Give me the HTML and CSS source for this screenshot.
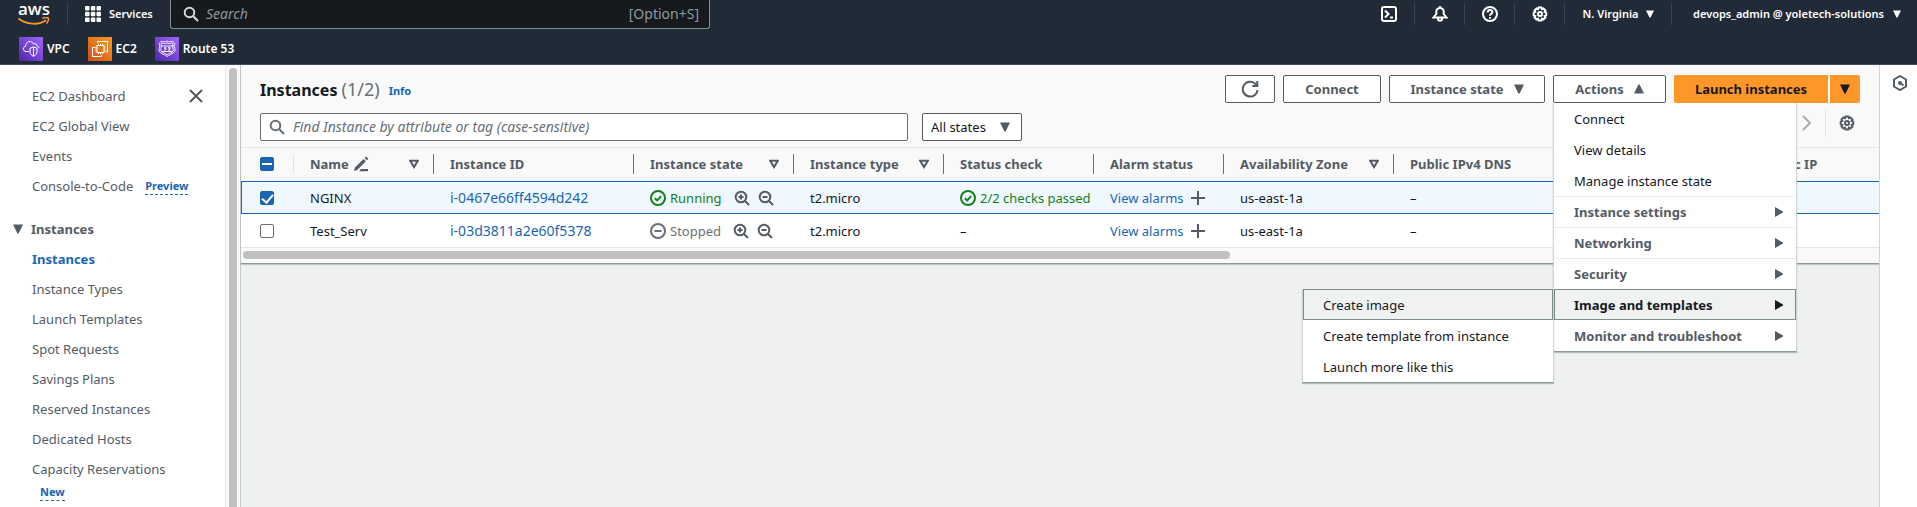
FILE: index.html
```html
<!DOCTYPE html>
<html lang="en">
<head>
<meta charset="utf-8">
<title>Instances | EC2</title>
<link rel="stylesheet" href="styles.css">
</head>
<body>
<svg class="defs" aria-hidden="true">
  <symbol id="search" viewBox="0 0 16 16"><circle cx="6.500" cy="6.500" r="4.800"/><path d="M10.200 10.200 15 15"/></symbol>
  <symbol id="down" viewBox="0 0 10 10"><path d="M0 .5h10L5.600 9.500H4.400z"/></symbol>
  <symbol id="up" viewBox="0 0 10 10"><path d="M0 9.500h10L5.600 .5H4.400z"/></symbol>
  <symbol id="right" viewBox="0 0 10 10"><path d="M1 0v10l8-4.500v-1z"/></symbol>
  <symbol id="sort" viewBox="0 0 10 10"><path d="M1.200 1.800h7.600L5 8z"/></symbol>
  <symbol id="gear" viewBox="0 0 16 16"><path d="M6.600 1h2.800l.5 1.600 1.500-.7 2 2-.8 1.500 1.600.6v2.800l-1.600.6.8 1.500-2 2-1.500-.8-.5 1.700H6.600L6 12.100l-1.500.8-2-2 .8-1.500L1.700 8.800V6l1.600-.6-.8-1.500 2-2 1.500.7z" transform="translate(0 .6)"/><circle cx="8" cy="8" r="2"/></symbol>
  <symbol id="zoomin" viewBox="0 0 16 16"><circle cx="7" cy="7" r="5.300"/><path d="m11 11 4 4M7 4.500v5M4.500 7h5"/></symbol>
  <symbol id="zoomout" viewBox="0 0 16 16"><circle cx="7" cy="7" r="5.300"/><path d="m11 11 4 4M4.500 7h5"/></symbol>
  <symbol id="ok" viewBox="0 0 16 16"><circle cx="8" cy="8" r="7"/><path d="m4.800 8.200 2.300 2.200 4.100-4.300"/></symbol>
  <symbol id="stopped" viewBox="0 0 16 16"><circle cx="8" cy="8" r="7"/><path d="M4.500 8h7"/></symbol>
  <symbol id="plus" viewBox="0 0 16 16"><path d="M8 1v14M1 8h14"/></symbol>
</svg>

<header class="topbar">
  <div class="topbar-main">
    <a class="logo" href="#" aria-label="AWS home">
      <span class="logo-text">aws</span>
      <svg class="logo-smile" viewBox="0 0 32 8"><path d="M.5 1.500C8 8 21 8.300 28 3.200" fill="none" stroke="#ff9926" stroke-width="1.800"/><path d="M24.500 1.300c2-1 5-1.100 5.700-.3s0 3.700-1.600 5.400" fill="none" stroke="#ff9926" stroke-width="1.500"/></svg>
    </a>
    <button class="services" type="button">
      <svg class="i16" viewBox="0 0 16 16" fill="#fff"><path d="M1 0h2.500a1 1 0 0 1 1 1v2.500a1 1 0 0 1-1 1H1a1 1 0 0 1-1-1V1a1 1 0 0 1 1-1z" id="g"/><use href="#g" x="5.800"/><use href="#g" x="11.500"/><use href="#g" y="5.800"/><use href="#g" x="5.800" y="5.800"/><use href="#g" x="11.500" y="5.800"/><use href="#g" y="11.500"/><use href="#g" x="5.800" y="11.500"/><use href="#g" x="11.500" y="11.500"/></svg>
      Services
    </button>
    <label class="global-search">
      <svg class="i16 line"><use href="#search"/></svg>
      <input type="search" placeholder="Search" aria-label="Search">
      <span>[Option+S]</span>
    </label>
    <div class="tools">
      <button class="tool" type="button" aria-label="CloudShell"><svg class="i16 line" viewBox="0 0 16 16"><rect x="1" y="1" width="14" height="14" rx="2"/><path d="m4 4.500 3.500 3.500L4 11.500M9 11.500h3"/></svg></button>
      <button class="tool" type="button" aria-label="Notifications"><svg class="i16 line" viewBox="0 0 16 16"><path d="M8 0v2M1.500 11.500h13L11.700 8V5.500C11.700 3.500 10 2 8 2S4.300 3.500 4.300 5.500V8zM6 12v1.200c0 1.800 4 1.800 4 0V12"/></svg></button>
      <button class="tool" type="button" aria-label="Help"><svg class="i16 line" viewBox="0 0 16 16"><circle cx="8" cy="8" r="7"/><path d="M5.600 6.500C5.600 3.200 10.400 3.200 10.400 6.200 10.400 7.800 8 7.800 8 9.800M8 11v1.800"/></svg></button>
      <button class="tool" type="button" aria-label="Settings"><svg class="i16 line"><use href="#gear"/></svg></button>
      <button class="tool region" type="button">N. Virginia <svg class="caret-s"><use href="#down"/></svg></button>
      <button class="tool account" type="button">devops_admin @ yoletech-solutions <svg class="caret-s"><use href="#down"/></svg></button>
    </div>
  </div>
  <nav class="favorites" aria-label="Favorites">
    <a href="#"><svg class="svc" viewBox="0 0 24 24"><defs><linearGradient id="pu" x1="0" y1="1" x2="1" y2="0"><stop offset="0" stop-color="#4d27aa"/><stop offset="1" stop-color="#a166ff"/></linearGradient><linearGradient id="or" x1="0" y1="1" x2="1" y2="0"><stop offset="0" stop-color="#c8511b"/><stop offset="1" stop-color="#ff9a1f"/></linearGradient></defs><path fill="url(#pu)" d="M0 0h24v24H0z"/><g fill="none" stroke="#fff" stroke-width="1"><path d="M10 14.500H7c-3.500-.5-3.500-4.500-.5-5C6.500 4 13 3 14.500 7c2-1 3.500.3 3.500 2 1.300.3 1.800 1 2 2"/><path d="M14.500 10 18 11.200v3.500c0 2.200-1.500 3.500-3.500 4.600-2-1.100-3.500-2.400-3.500-4.600v-3.500zM14.500 10v9"/></g></svg>VPC</a>
    <a href="#"><svg class="svc" viewBox="0 0 24 24"><path fill="url(#or)" d="M0 0h24v24H0z"/><g fill="none" stroke="#fff" stroke-width="1"><rect x="9" y="8.500" width="7" height="7"/><path d="M10.500 6.800v1.700M12.500 6.800v1.700M14.500 6.800v1.700M10.500 15.500v1.700M12.500 15.500v1.700M14.500 15.500v1.700M7.300 10H9M7.300 12H9M7.300 14H9M16 10h1.700M16 12h1.700M16 14h1.700M9.500 6V4.500h10V15H18M7 10.500H4.500v9h9V18"/></g></svg>EC2</a>
    <a href="#"><svg class="svc" viewBox="0 0 24 24"><path fill="url(#pu)" d="M0 0h24v24H0z"/><g fill="none" stroke="#fff" stroke-width=".9"><path d="M6.500 4c2 1.500 3.800.8 5.500 0 1.700.8 3.500 1.500 5.500 0l2.300 2.500c-1.300 2.500.2 4 .2 6.500 0 3.500-5 4-8 6.500-3-2.500-8-3-8-6.500C4 10.500 5.500 9 4.200 6.500z"/><path d="M7 6c2 1 3.500.5 5 0 1.500.5 3 1 5 0l1 1.200c-1 2 .2 3.800.2 5.800 0 2.500-4 3-6.200 4.800C9.800 16 5.800 15.500 5.800 13c0-2 1.200-3.800.2-5.800zM5.500 9h13M6 14.500h12"/><path d="M11.200 10.300H9.500v1.200h1.300v1.500H9.200M13 10.300h2v2.800h-2M13.500 11.700H15"/></g></svg>Route 53</a>
  </nav>
</header>

<div class="layout">
  <nav class="sidebar" aria-label="EC2">
    <div class="side-content">
      <ul>
        <li><a href="#">EC2 Dashboard</a><button class="close" type="button" aria-label="Close navigation"><svg viewBox="0 0 14 14"><path d="m1 1 12 12M13 1 1 13"/></svg></button></li>
        <li><a href="#">EC2 Global View</a></li>
        <li><a href="#">Events</a></li>
        <li><a href="#">Console-to-Code</a><a class="tag" href="#">Preview</a></li>
      </ul>
      <button class="side-group" type="button"><svg class="caret"><use href="#down"/></svg>Instances</button>
      <ul>
        <li><a class="current" href="#">Instances</a></li>
        <li><a href="#">Instance Types</a></li>
        <li><a href="#">Launch Templates</a></li>
        <li><a href="#">Spot Requests</a></li>
        <li><a href="#">Savings Plans</a></li>
        <li><a href="#">Reserved Instances</a></li>
        <li><a href="#">Dedicated Hosts</a></li>
        <li class="wrap"><a href="#">Capacity Reservations</a><a class="tag" href="#">New</a></li>
      </ul>
    </div>
    <div class="side-scroll"><div class="side-thumb"></div></div>
  </nav>

  <main>
    <section class="panel">
      <div class="title-row">
        <h1>Instances <span>(1/2)</span></h1>
        <a class="info" href="#">Info</a>
        <div class="actions">
          <button class="btn refresh" type="button" aria-label="Refresh"><svg class="i18 line" viewBox="0 0 18 18"><path d="M16.500 10.200A7.400 7.400 0 1 1 14.600 4.100L16 5.600M16.300 1v5h-5"/></svg></button>
          <button class="btn connect" type="button">Connect</button>
          <button class="btn state" type="button">Instance state <svg class="caret"><use href="#down"/></svg></button>
          <div class="menu-anchor">
            <button class="btn act" type="button" aria-expanded="true">Actions <svg class="caret"><use href="#up"/></svg></button>
            <ul class="menu" role="menu">
              <li><button type="button" role="menuitem">Connect</button></li>
              <li><button type="button" role="menuitem">View details</button></li>
              <li><button type="button" role="menuitem">Manage instance state</button></li>
              <li class="group"><button type="button" role="menuitem">Instance settings <svg class="caret"><use href="#right"/></svg></button></li>
              <li class="group"><button type="button" role="menuitem">Networking <svg class="caret"><use href="#right"/></svg></button></li>
              <li class="group"><button type="button" role="menuitem">Security <svg class="caret"><use href="#right"/></svg></button></li>
              <li class="group open"><button class="active" type="button" role="menuitem">Image and templates <svg class="caret"><use href="#right"/></svg></button>
                <ul class="menu submenu" role="menu">
                  <li><button class="active" type="button" role="menuitem">Create image</button></li>
                  <li><button type="button" role="menuitem">Create template from instance</button></li>
                  <li><button type="button" role="menuitem">Launch more like this</button></li>
                </ul>
              </li>
              <li class="group last"><button type="button" role="menuitem">Monitor and troubleshoot <svg class="caret"><use href="#right"/></svg></button></li>
            </ul>
          </div>
          <div class="split">
            <button class="primary" type="button">Launch instances</button>
            <button class="primary more" type="button" aria-label="More launch options"><svg class="caret"><use href="#down"/></svg></button>
          </div>
        </div>
      </div>

      <div class="filter-row">
        <label class="filter">
          <svg class="i16 line"><use href="#search"/></svg>
          <input type="text" placeholder="Find Instance by attribute or tag (case-sensitive)" aria-label="Find instance">
        </label>
        <label class="select"><select aria-label="State filter"><option>All states</option></select><svg class="caret"><use href="#down"/></svg></label>
        <div class="pager">
          <button type="button" aria-label="Next page"><svg class="next" viewBox="0 0 10 16"><path d="m1 1 7 7-7 7"/></svg></button>
          <button class="prefs" type="button" aria-label="Preferences"><svg class="i16 line"><use href="#gear"/></svg></button>
        </div>
      </div>

      <div class="table-wrap">
        <table>
          <colgroup><col class="c-check"><col class="c-name"><col class="c-id"><col class="c-state"><col class="c-type"><col class="c-status"><col class="c-alarm"><col class="c-zone"><col class="c-dns"><col></colgroup>
          <thead><tr>
            <th class="check"><div class="head soft"><input class="mixed" type="checkbox" aria-label="Select all"></div></th>
            <th><div class="head">Name <svg class="i16 edit" viewBox="0 0 16 16"><path d="m1 15 .8-3.200L10.500 3l2.300 2.300L4.200 14zM11.500 2l1.600-1.600 2.300 2.300-1.600 1.600z"/><path d="M8 13h7v2.200H6z"/></svg><svg class="sort"><use href="#sort"/></svg></div></th>
            <th><div class="head">Instance ID</div></th>
            <th><div class="head">Instance state<svg class="sort"><use href="#sort"/></svg></div></th>
            <th><div class="head">Instance type<svg class="sort"><use href="#sort"/></svg></div></th>
            <th><div class="head">Status check</div></th>
            <th><div class="head">Alarm status</div></th>
            <th><div class="head">Availability Zone<svg class="sort"><use href="#sort"/></svg></div></th>
            <th><div class="head">Public IPv4 DNS</div></th>
            <th><div class="head none">Elastic IP</div></th>
          </tr></thead>
          <tbody>
            <tr class="selected">
              <td class="check"><input type="checkbox" checked aria-label="Select NGINX"></td>
              <td>NGINX</td>
              <td><a class="id" href="#">i-0467e66ff4594d242</a></td>
              <td><div class="cell"><span class="status good"><svg class="i16 line"><use href="#ok"/></svg>Running</span><svg class="i16 line"><use href="#zoomin"/></svg><svg class="i16 line"><use href="#zoomout"/></svg></div></td>
              <td>t2.micro</td>
              <td class="flush"><div class="status good"><svg class="i16 line"><use href="#ok"/></svg>2/2 checks passed</div></td>
              <td><div class="cell alarm"><a href="#">View alarms</a><svg class="i16 line"><use href="#plus"/></svg></div></td>
              <td>us-east-1a</td>
              <td>–</td>
              <td></td>
            </tr>
            <tr>
              <td class="check"><input type="checkbox" aria-label="Select Test_Serv"></td>
              <td>Test_Serv</td>
              <td><a class="id" href="#">i-03d3811a2e60f5378</a></td>
              <td><div class="cell"><span class="status off"><svg class="i16 line"><use href="#stopped"/></svg>Stopped</span><svg class="i16 line"><use href="#zoomin"/></svg><svg class="i16 line"><use href="#zoomout"/></svg></div></td>
              <td>t2.micro</td>
              <td>–</td>
              <td><div class="cell alarm"><a href="#">View alarms</a><svg class="i16 line"><use href="#plus"/></svg></div></td>
              <td>us-east-1a</td>
              <td>–</td>
              <td></td>
            </tr>
          </tbody>
        </table>
      </div>
      <div class="h-scroll"><div class="h-thumb"></div></div>
    </section>
  </main>

  <aside class="rail">
    <button type="button" aria-label="Open tools"><svg class="i16 line" viewBox="0 0 16 16"><path d="m8 1 6 3.500v7L8 15l-6-3.500v-7z"/><circle cx="8" cy="8" r="1" fill="currentColor"/><path d="m8 8 3.500 2.500"/></svg></button>
  </aside>
</div>
</body>
</html>
```

FILE: styles.css
```css
* { box-sizing: border-box; }

body {
  margin: 0;
  height: 100vh;
  display: flex;
  flex-direction: column;
  overflow: hidden;
  font: 13px/20px "Noto Sans", "Open Sans", sans-serif;
  color: #16191f;
  background: #eff1f1;
}

button, input, select { font: inherit; color: inherit; }
button { border: 0; background: none; padding: 0; cursor: pointer; }
a { color: #1a66b3; text-decoration: none; }
ul { list-style: none; margin: 0; padding: 0; }
svg { flex: none; display: block; }

.defs { display: none; }
.i16 { width: 16px; height: 16px; }
.i18 { width: 18px; height: 18px; }
.line { fill: none; stroke: currentColor; stroke-width: 2; }
.caret { width: 10px; height: 10px; fill: currentColor; }
.caret-s { width: 8px; height: 8px; fill: currentColor; }

/* Top bar */
.topbar {
  flex: none;
  padding-bottom: 3px;
  background: #212b37;
  border-bottom: 1px solid #414d5c;
  color: #fff;
  font-size: 11px;
  font-weight: 600;
}
.topbar-main { display: flex; height: 29px; margin-bottom: 8px; }
.logo { display: flex; flex-direction: column; width: 67px; padding: 1px 0 0 18px; color: #fff; }
.logo-text { font: 600 17px/16px "Open Sans", "Noto Sans", sans-serif; }
.logo-smile { width: 32px; height: 8px; }
.services { display: flex; align-items: center; gap: 8px; width: 103px; padding-left: 17px; }
.services, .tool {
  border-left: 1px solid #3b4552;
  height: 22px;
  margin-top: 3px;
}
.tool:first-child { border-left: 0; }
.global-search {
  display: flex;
  align-items: center;
  gap: 7px;
  flex: 0 1 540px;
  min-width: 0;
  padding: 0 10px 0 12px;
  border: 1px solid #7f8f8f;
  border-top: 0;
  border-radius: 0 0 3px 3px;
  background: #16191d;
  color: #8c9b9b;
  font-size: 14px;
  font-weight: 400;
}
.global-search .i16 { color: #d5dbdb; }
.global-search input { flex: 1; min-width: 0; border: 0; padding: 0; background: none; outline: 0; }
input::placeholder { color: inherit; font-style: italic; opacity: 1; }
.tools { display: flex; margin-left: auto; padding-right: 16px; }
.tool { display: flex; align-items: center; justify-content: center; width: 50px; }
.region { width: 107px; gap: 7px; }
.account { width: auto; gap: 9px; padding-left: 21px; }
.favorites { display: flex; gap: 18px; padding-left: 19px; font-size: 12px; }
.favorites a { display: flex; align-items: center; gap: 4px; color: #fff; }
.svc { width: 24px; height: 24px; }

/* Page frame */
.layout { display: flex; flex: 1; min-height: 0; }

/* Side navigation */
.sidebar { display: flex; flex: none; width: 241px; background: #fff; border-right: 1px solid #c4c9cf; color: #545b64; }
.side-content { flex: 1; padding-top: 16px; min-width: 0; }
.side-content li { display: flex; align-items: center; height: 30px; padding-left: 32px; }
.side-content li a { color: #545b64; }
.side-content li a.current { color: #1a66b3; font-weight: 700; }
.close { margin-left: auto; margin-right: 22px; }
.close svg { width: 14px; height: 14px; stroke: #545b64; stroke-width: 2; fill: none; }
.side-content a.tag { color: #1a66b3; font-size: 11px; font-weight: 700; line-height: 16px; border-bottom: 1px dashed #1a66b3; margin-left: 12px; }
.side-group { display: flex; align-items: center; gap: 8px; height: 31px; margin: 12px 0 0; padding-left: 13px; font-weight: 700; }
.side-content .wrap { flex-wrap: wrap; height: auto; padding-top: 5px; row-gap: 5px; }
.side-content .wrap a:first-child { width: 100%; }
.side-content .wrap .tag { margin-left: 8px; }
.side-scroll { width: 15px; padding: 3px 3px 0; background: #fafafa; border-left: 1px solid #e6e8e8; }
.side-thumb { width: 8px; height: 100%; border-radius: 4px 4px 0 0; background: #c1c1c1; }

/* Main panel */
main { flex: 1; min-width: 0; }
.panel { background: #f9f9f9; border-bottom: 1px solid #8b9999; box-shadow: 0 1px 1px rgba(0, 28, 36, .2); }
.title-row { display: flex; align-items: center; padding: 10px 19px 0 19px; }
h1 { margin: 0; font-size: 16px; line-height: 24px; font-weight: 700; }
h1 span { color: #687078; font-size: 18px; font-weight: 400; }
.info { margin: 4px 0 0 9px; font-size: 11px; line-height: 16px; font-weight: 700; }
.actions { display: flex; gap: 8px; margin-left: auto; }
.btn {
  display: flex; align-items: center; justify-content: center; gap: 10px;
  height: 28px;
  border: 1px solid #545b64; border-radius: 2px;
  background: #fff; color: #545b64; font-weight: 700;
}
.refresh { width: 50px; }
.connect { width: 98px; }
.state { width: 156px; }
.act { width: 113px; }
.split { display: flex; gap: 2px; }
.primary { display: flex; align-items: center; justify-content: center; width: 154px; height: 28px; background: #ff9628; font-weight: 700; border-radius: 2px 0 0 2px; }
.more { width: 30px; border-radius: 0 2px 2px 0; }

/* Drop-down menus */
.menu-anchor { position: relative; }
.menu {
  position: absolute; z-index: 5; top: 28px; left: 0; width: 244px;
  background: #fff;
  border: 1px solid #d0d6d6; border-top: 0; border-bottom-color: #8b9999;
  box-shadow: 0 1px 1px rgba(0, 28, 36, .25);
}
.menu button {
  display: flex; align-items: center; justify-content: space-between;
  width: 100%; height: 31px; padding: 0 11px 0 19px;
  border: 1px solid transparent;
  text-align: left;
}
.menu .group { position: relative; }
.menu .group > button { color: #545b64; font-weight: 700; border-top-color: #eaeded; }
.menu .active, .menu .group > .active { background: #f0f1f1; border-color: #7c8c8c; color: #16191f; }
.menu .last > button { border-top-color: transparent; }
.submenu { top: 0; right: 100%; left: auto; width: 252px; }
.submenu li button, .submenu .active { font-weight: 400; }

/* Filters */
.filter-row { display: flex; align-items: flex-start; gap: 14px; padding: 6px 19px; }
.filter {
  display: flex; align-items: center; gap: 8px;
  flex: 0 1 648px; height: 28px; margin-top: 4px; padding: 0 8px;
  border: 1px solid #687078; border-radius: 2px;
  background: #fff; color: #687078; font-size: 14px;
}
.filter input { flex: 1; min-width: 0; border: 0; padding: 0; background: none; outline: 0; }
.select { display: grid; align-items: center; width: 100px; margin-top: 4px; }
.select > * { grid-area: 1 / 1; }
.select select { appearance: none; height: 28px; padding: 0 8px; border: 1px solid #545b64; border-radius: 2px; background: #fff; }
.select .caret { justify-self: end; margin-right: 12px; color: #545b64; pointer-events: none; }
.pager { display: flex; align-items: center; gap: 13px; margin-left: auto; margin-right: 5px; color: #545b64; }
.next { width: 10px; height: 16px; fill: none; stroke: #a3afaf; stroke-width: 2; }
.prefs { display: flex; align-items: center; height: 28px; padding-left: 13px; border-left: 1px solid #e0e4e4; }

/* Table */
.table-wrap { overflow: hidden; border-bottom: 1px solid #e3e6e6; }
table { width: 100%; table-layout: fixed; border-spacing: 0; }
.c-check { width: 53px; }
.c-name { width: 140px; }
.c-id { width: 200px; }
.c-state { width: 160px; }
.c-type, .c-status { width: 150px; }
.c-alarm { width: 130px; }
.c-zone { width: 170px; }
.c-dns { width: 349px; }
th { height: 34px; padding: 0 0 1px 16px; border-top: 1px solid #e6e9e9; text-align: left; color: #545b64; font-weight: 700; }
.head { display: flex; align-items: center; height: 20px; padding-right: 14px; border-right: 1px solid #687078; white-space: nowrap; }
.head.soft { border-color: #e0e4e4; }
.head.none { border: 0; }
.sort { width: 10px; height: 10px; margin-left: auto; fill: none; stroke: #545b64; stroke-width: 2; }
.edit { margin-left: 4px; fill: #545b64; }
td { height: 33px; padding: 0 0 0 16px; background: #fff; white-space: nowrap; overflow: hidden; border: 0 solid #1a66b3; }
th.check, td.check { padding-left: 19px; }
.selected td { background: #f0f8ff; border-width: 1px 0; }
.selected td.check { border-left-width: 1px; padding-left: 18px; }
.id { font-size: 14px; }
.cell { display: flex; align-items: center; gap: 8px; color: #545b64; }
.cell .status { margin-right: 4px; }
.cell.alarm { gap: 6px; }
.status { display: flex; align-items: center; gap: 4px; }
.good { color: #14801a; }
.off { color: #687078; }
input[type="checkbox"] {
  appearance: none;
  display: grid; place-items: center;
  width: 14px; height: 14px; margin: 0;
  border: 1px solid #687078; border-radius: 2px; background: #fff;
}
input[type="checkbox"]:checked, input.mixed[type="checkbox"] { background: #1a66b3; border-color: #1a66b3; }
input.mixed::after { content: ""; width: 10px; height: 2px; background: #fff; }
input:checked::after { content: ""; width: 5px; height: 9px; margin-bottom: 2px; border: solid #fff; border-width: 0 2px 2px 0; transform: rotate(40deg); }
.h-scroll { height: 15px; padding: 3px 2px; }
.h-thumb { width: 60.4%; height: 8px; border-radius: 4px; background: #c1c1c1; }

/* Right rail */
.rail { flex: none; width: 38px; padding: 10px 0 0 12px; background: #fff; border-left: 1px solid #d0d6d6; color: #545b64; }
```
